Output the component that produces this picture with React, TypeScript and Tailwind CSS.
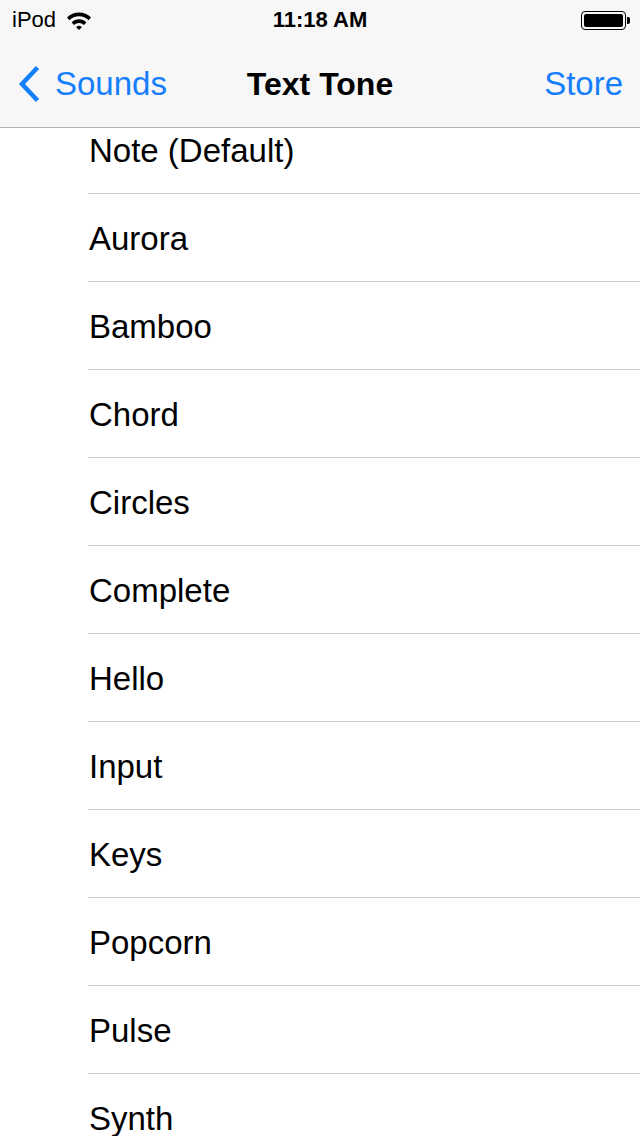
const tones = [
  'Note (Default)',
  'Aurora',
  'Bamboo',
  'Chord',
  'Circles',
  'Complete',
  'Hello',
  'Input',
  'Keys',
  'Popcorn',
  'Pulse',
  'Synth',
];

const font = { fontFamily: '"Liberation Sans", Arial, sans-serif' };

const StatusBar = () => (
  <div className="h-[40px] flex items-center justify-between px-[12px] relative text-black">
    <div className="flex items-center gap-[10px]">
      <span className="text-[22px] leading-none">iPod</span>
      <svg width="26" height="19" viewBox="0 0 26 19">
        <path d="M1 6.5 A17 17 0 0 1 25 6.5 L22.5 9.3 A13.3 13.3 0 0 0 3.5 9.3 Z" fill="black" />
        <path d="M5.6 11.4 A10.3 10.3 0 0 1 20.4 11.4 L17.9 14.1 A6.7 6.7 0 0 0 8.1 14.1 Z" fill="black" />
        <path d="M10.2 16.2 A4 4 0 0 1 15.8 16.2 L13 19 Z" fill="black" />
      </svg>
    </div>
    <span className="absolute left-1/2 -translate-x-1/2 text-[22px] font-bold leading-none">11:18 AM</span>
    <div className="flex items-center mr-[-2px]">
      <div className="w-[45px] h-[19px] rounded-[4px] border-[1.5px] border-black p-[2px]">
        <div className="w-full h-full bg-black rounded-[2px]" />
      </div>
      <div className="w-[3px] h-[7px] bg-black rounded-r-[2px] ml-[1px]" />
    </div>
  </div>
);

const NavBar = () => (
  <div className="h-[88px] flex items-center justify-between relative border-b border-[#b2b2b2]">
    <div className="flex items-center text-[#157efb] pl-[17px]">
      <svg width="24" height="38" viewBox="0 0 24 38">
        <path d="M20.5 2.5 L5 19 L20.5 35.5" fill="none" stroke="#157efb" strokeWidth="4.5" />
      </svg>
      <span className="text-[33px] leading-none ml-[14px]">Sounds</span>
    </div>
    <span className="absolute left-1/2 -translate-x-1/2 text-[32px] font-bold leading-none">Text Tone</span>
    <span className="text-[#157efb] text-[33px] leading-none pr-[17px]">Store</span>
  </div>
);

export default function App() {
  return (
    <div className="w-[640px] h-[1136px] bg-white overflow-hidden flex flex-col" style={font}>
      <div className="bg-[#f7f7f8]">
        <StatusBar />
        <NavBar />
      </div>
      <div className="flex-1 overflow-hidden">
        <ul className="mt-[-22px]">
          {tones.map((t) => (
            <li key={t} className="pl-[88px]">
              <div className="h-[88px] flex items-center border-b border-[#c8c7cc] text-[33px] text-black leading-none">
                <span className="ml-[1px] pt-[2px]">{t}</span>
              </div>
            </li>
          ))}
        </ul>
      </div>
    </div>
  );
}
